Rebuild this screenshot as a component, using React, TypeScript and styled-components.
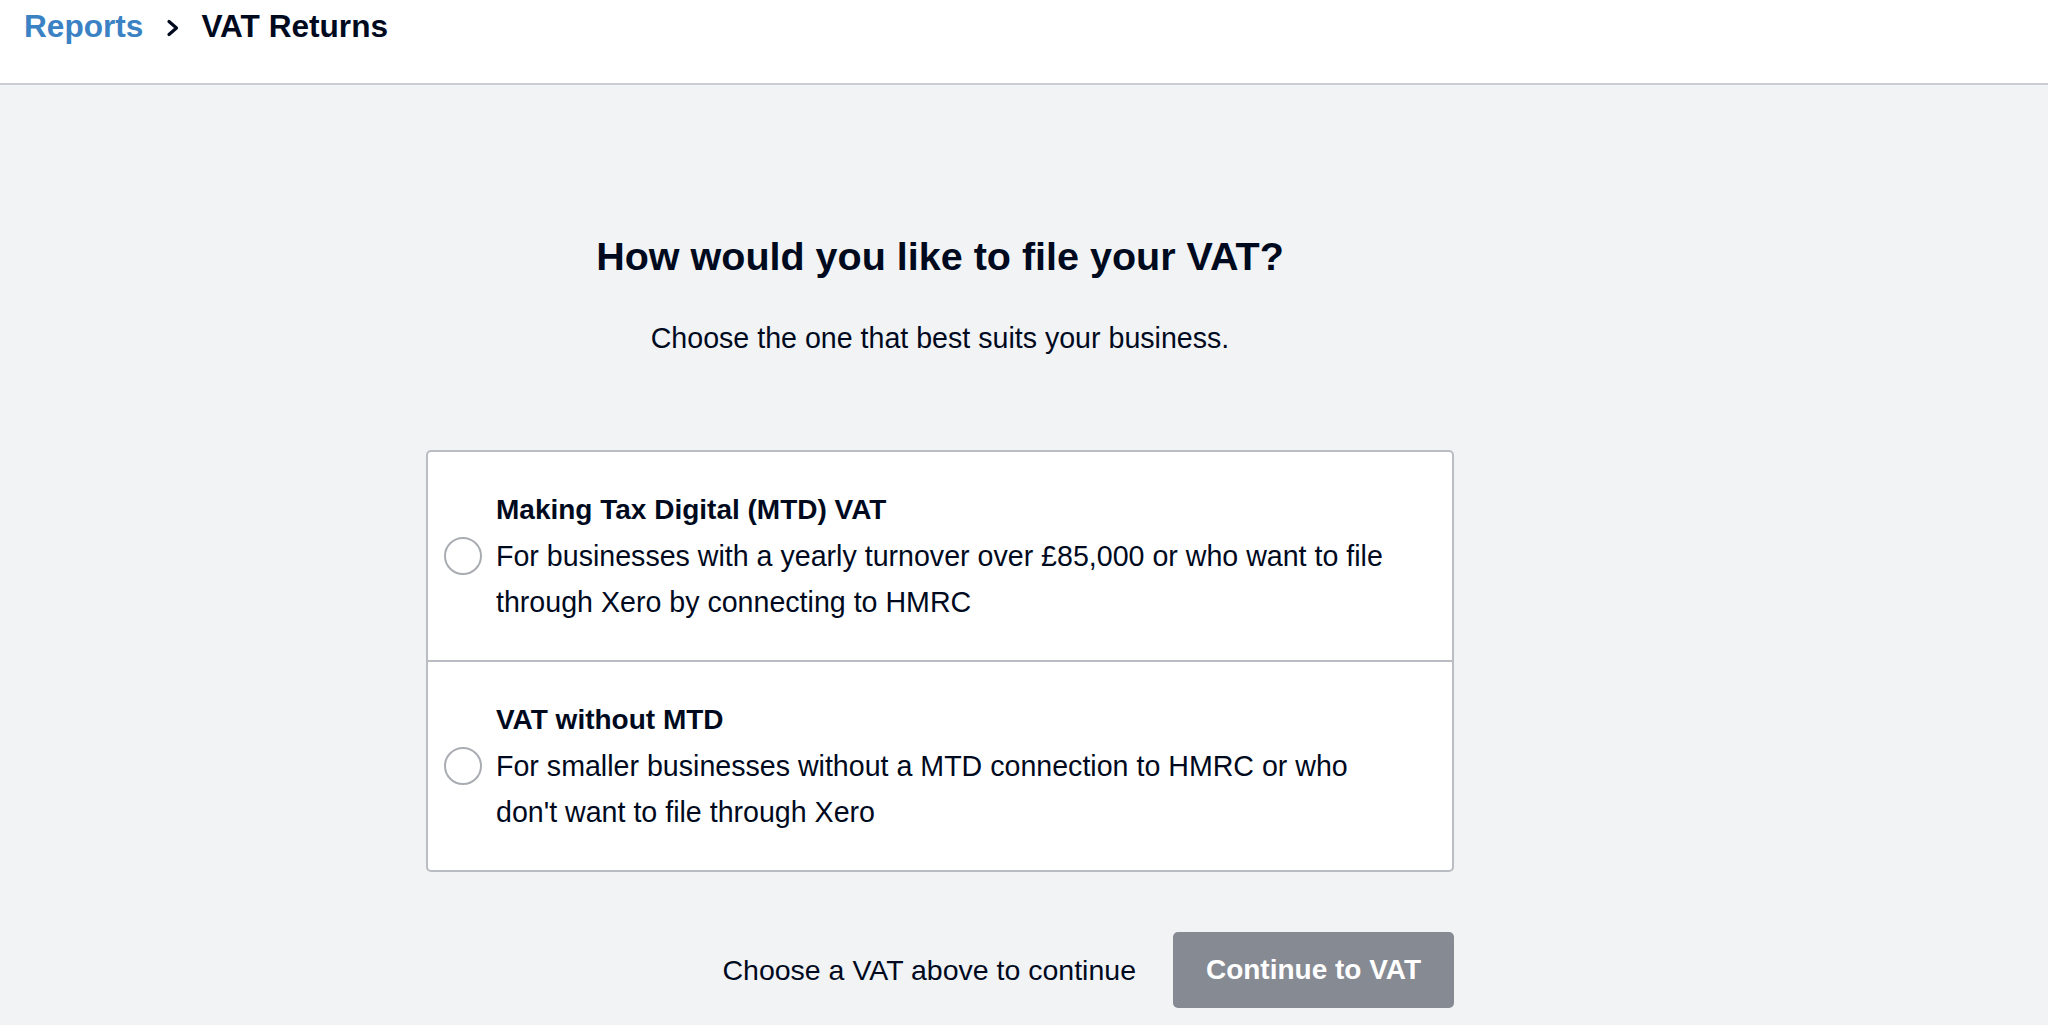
import React from "react";
import styled, { createGlobalStyle } from "styled-components";

const GlobalStyle = createGlobalStyle`
  html, body {
    margin: 0;
    padding: 0;
    background: #f2f3f5;
    font-family: "Liberation Sans", Arial, Helvetica, sans-serif;
    color: #000a1e;
  }
  #root {
    min-height: 100vh;
  }
`;

const Page = styled.div`
  min-height: 100vh;
  display: flex;
  flex-direction: column;
  background: #f2f3f5;
`;

const Header = styled.header`
  height: 85px;
  box-sizing: border-box;
  background: #ffffff;
  border-bottom: 2px solid #cbcdd2;
  padding: 8px 0 0 24px;
`;

const Breadcrumb = styled.nav`
  display: flex;
  align-items: center;
  font-size: 31.6px;
  line-height: 37px;
  font-weight: 700;
`;

const CrumbLink = styled.a`
  color: #3b82c4;
  text-decoration: none;
`;

const CrumbCurrent = styled.span`
  color: #000a1e;
`;

const Chevron = styled.svg`
  width: 16px;
  height: 20px;
  margin: 2px 20px 0 22px;
  flex: none;
`;

const Main = styled.main`
  display: flex;
  flex-direction: column;
  align-items: center;
  padding: 148px 168px 0 0;
`;

const Column = styled.div`
  width: 1028px;
  display: flex;
  flex-direction: column;
  align-items: stretch;
`;

const Heading = styled.h1`
  margin: 0;
  text-align: center;
  font-size: 39.5px;
  line-height: 47px;
  font-weight: 700;
  color: #000a1e;
`;

const Subtitle = styled.p`
  margin: 41px 0 0;
  text-align: center;
  font-size: 28.6px;
  line-height: 34px;
  color: #000a1e;
`;

const Card = styled.div`
  margin-top: 95px;
  background: #ffffff;
  border: 2px solid #b9bcc2;
  border-radius: 5px;
  overflow: hidden;
`;

const Option = styled.label<{ $divider?: boolean }>`
  display: flex;
  align-items: center;
  padding: 35px 51px 35px 16px;
  border-top: ${(p) => (p.$divider ? "2px solid #b9bcc2" : "none")};
  cursor: pointer;
`;

const Radio = styled.span`
  flex: none;
  width: 38px;
  height: 38px;
  box-sizing: border-box;
  border-radius: 50%;
  border: 2px solid #a9acb2;
  background: #ffffff;
  margin-right: 14px;
`;

const OptionText = styled.div`
  display: flex;
  flex-direction: column;
  font-size: 28.6px;
  line-height: 46px;
`;

const OptionTitle = styled.span`
  font-weight: 700;
  font-size: 28px;
  color: #000a1e;
`;

const OptionDesc = styled.span`
  color: #000a1e;
`;

const Footer = styled.div`
  margin-top: 60px;
  display: flex;
  justify-content: flex-end;
  align-items: center;
  gap: 37px;
`;

const Hint = styled.span`
  font-size: 28.5px;
  color: #000a1e;
`;

const ContinueButton = styled.button`
  height: 76px;
  width: 281px;
  box-sizing: border-box;
  border: none;
  border-radius: 5px;
  background: #858a93;
  color: #ffffff;
  font-family: "Liberation Sans", Arial, Helvetica, sans-serif;
  font-size: 28px;
  font-weight: 700;
  cursor: not-allowed;
`;

const options = [
  {
    title: "Making Tax Digital (MTD) VAT",
    desc: "For businesses with a yearly turnover over £85,000 or who want to file through Xero by connecting to HMRC",
  },
  {
    title: "VAT without MTD",
    desc: "For smaller businesses without a MTD connection to HMRC or who don't want to file through Xero",
  },
];

export default function App() {
  return (
    <Page>
      <GlobalStyle />
      <Header>
        <Breadcrumb>
          <CrumbLink href="#">Reports</CrumbLink>
          <Chevron viewBox="0 0 16 20" aria-hidden="true">
            <polyline
              points="4,3.5 11.5,10 4,16.5"
              fill="none"
              stroke="#000a1e"
              strokeWidth="3.2"
              strokeLinecap="round"
              strokeLinejoin="round"
            />
          </Chevron>
          <CrumbCurrent>VAT Returns</CrumbCurrent>
        </Breadcrumb>
      </Header>
      <Main>
        <Column>
          <Heading>How would you like to file your VAT?</Heading>
          <Subtitle>Choose the one that best suits your business.</Subtitle>
          <Card>
            {options.map((o, i) => (
              <Option key={o.title} $divider={i > 0}>
                <Radio />
                <OptionText>
                  <OptionTitle>{o.title}</OptionTitle>
                  <OptionDesc>{o.desc}</OptionDesc>
                </OptionText>
              </Option>
            ))}
          </Card>
          <Footer>
            <Hint>Choose a VAT above to continue</Hint>
            <ContinueButton disabled>Continue to VAT</ContinueButton>
          </Footer>
        </Column>
      </Main>
    </Page>
  );
}
